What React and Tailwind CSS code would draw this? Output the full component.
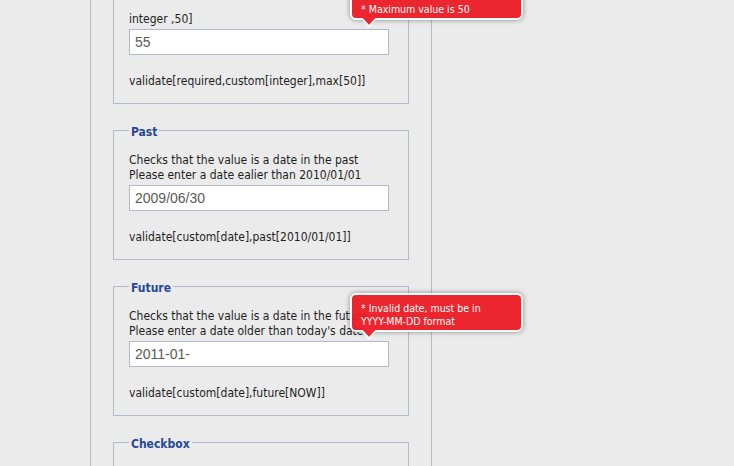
const FIELDSETS = [
  {
    title: 'Past',
    lines: ['Checks that the value is a date in the past', 'Please enter a date ealier than 2010/01/01'],
    value: '2009/06/30',
    rule: 'validate[custom[date],past[2010/01/01]]',
  },
  {
    title: 'Future',
    lines: ['Checks that the value is a date in the future', "Please enter a date older than today's date"],
    value: '2011-01-',
    rule: 'validate[custom[date],future[NOW]]',
    error: ['Invalid date, must be in', 'YYYY-MM-DD format'],
  },
];

function Prompt({ lines }) {
  return (
    <div className="absolute left-[221px] bottom-[calc(100%+9px)] z-10 opacity-95">
      <div className="w-[173px] rounded-[6px] border-2 border-white bg-[#ed1c24] px-[9px] pt-[7px] pb-[2px] text-[10.5px] leading-[13px] text-white shadow-[0_0_5px_rgba(0,0,0,0.45)]">
        {lines.map((l, i) => (
          <div key={i}>{i === 0 ? <>* {l}</> : l}</div>
        ))}
      </div>
      <svg className="absolute left-[11px] top-[calc(100%-2px)]" width="16" height="10" viewBox="0 0 16 10">
        <path d="M1 0 L8 8 L15 0 Z" fill="#ed1c24" />
        <path d="M1 0.5 L8 8 L15 0.5" fill="none" stroke="#ffffff" strokeWidth="1.6" />
      </svg>
    </div>
  );
}

function Field({ value, error }) {
  return (
    <div className="relative mt-[2px]">
      <input
        readOnly
        value={value}
        className="h-[26px] w-[260px] border border-[#b4b8cc] bg-white px-[5px] text-[14px] text-[#5a5a5a] outline-none"
        style={{ fontFamily: '"Liberation Sans", Arial, sans-serif' }}
      />
      {error && <Prompt lines={error} />}
    </div>
  );
}

export default function App() {
  return (
    <div
      className="min-h-screen bg-[#ebebeb] text-[12px] leading-[15px] text-[#1e1e1e]"
      style={{ fontFamily: '"DejaVu Sans Condensed", "DejaVu Sans", sans-serif' }}
    >
      <div className="ml-[90px] min-h-[466px] w-[342px] border-x border-[#b4b8cc] px-[22px]">
        {/* first block is scrolled past, only its lower half shows */}
        <div className="border-x border-b border-[#b4b8cc] px-[15px] pt-[12px] pb-[14px]">
          <div>integer ,50]</div>
          <Field value="55" error={['Maximum value is 50']} />
          <div className="mt-[19px]">validate[required,custom[integer],max[50]]</div>
        </div>

        {FIELDSETS.map((f) => (
          <fieldset key={f.title} className="mt-[16.5px] border border-[#b4b8cc] px-[15px] pb-[14px]">
            <legend className="px-[2px] pt-[4px] text-[12px] font-bold leading-[15px] text-[#26489a]">{f.title}</legend>
            <div className="pt-[13.5px]">
              {f.lines.map((l) => (
                <div key={l}>{l}</div>
              ))}
            </div>
            <Field value={f.value} error={f.error} />
            <div className="mt-[19px]">{f.rule}</div>
          </fieldset>
        ))}

        <fieldset className="mt-[16.5px] h-[60px] border border-b-0 border-[#b4b8cc] px-[15px]">
          <legend className="px-[2px] pt-[4px] text-[12px] font-bold leading-[15px] text-[#26489a]">Checkbox</legend>
        </fieldset>
      </div>
    </div>
  );
}
